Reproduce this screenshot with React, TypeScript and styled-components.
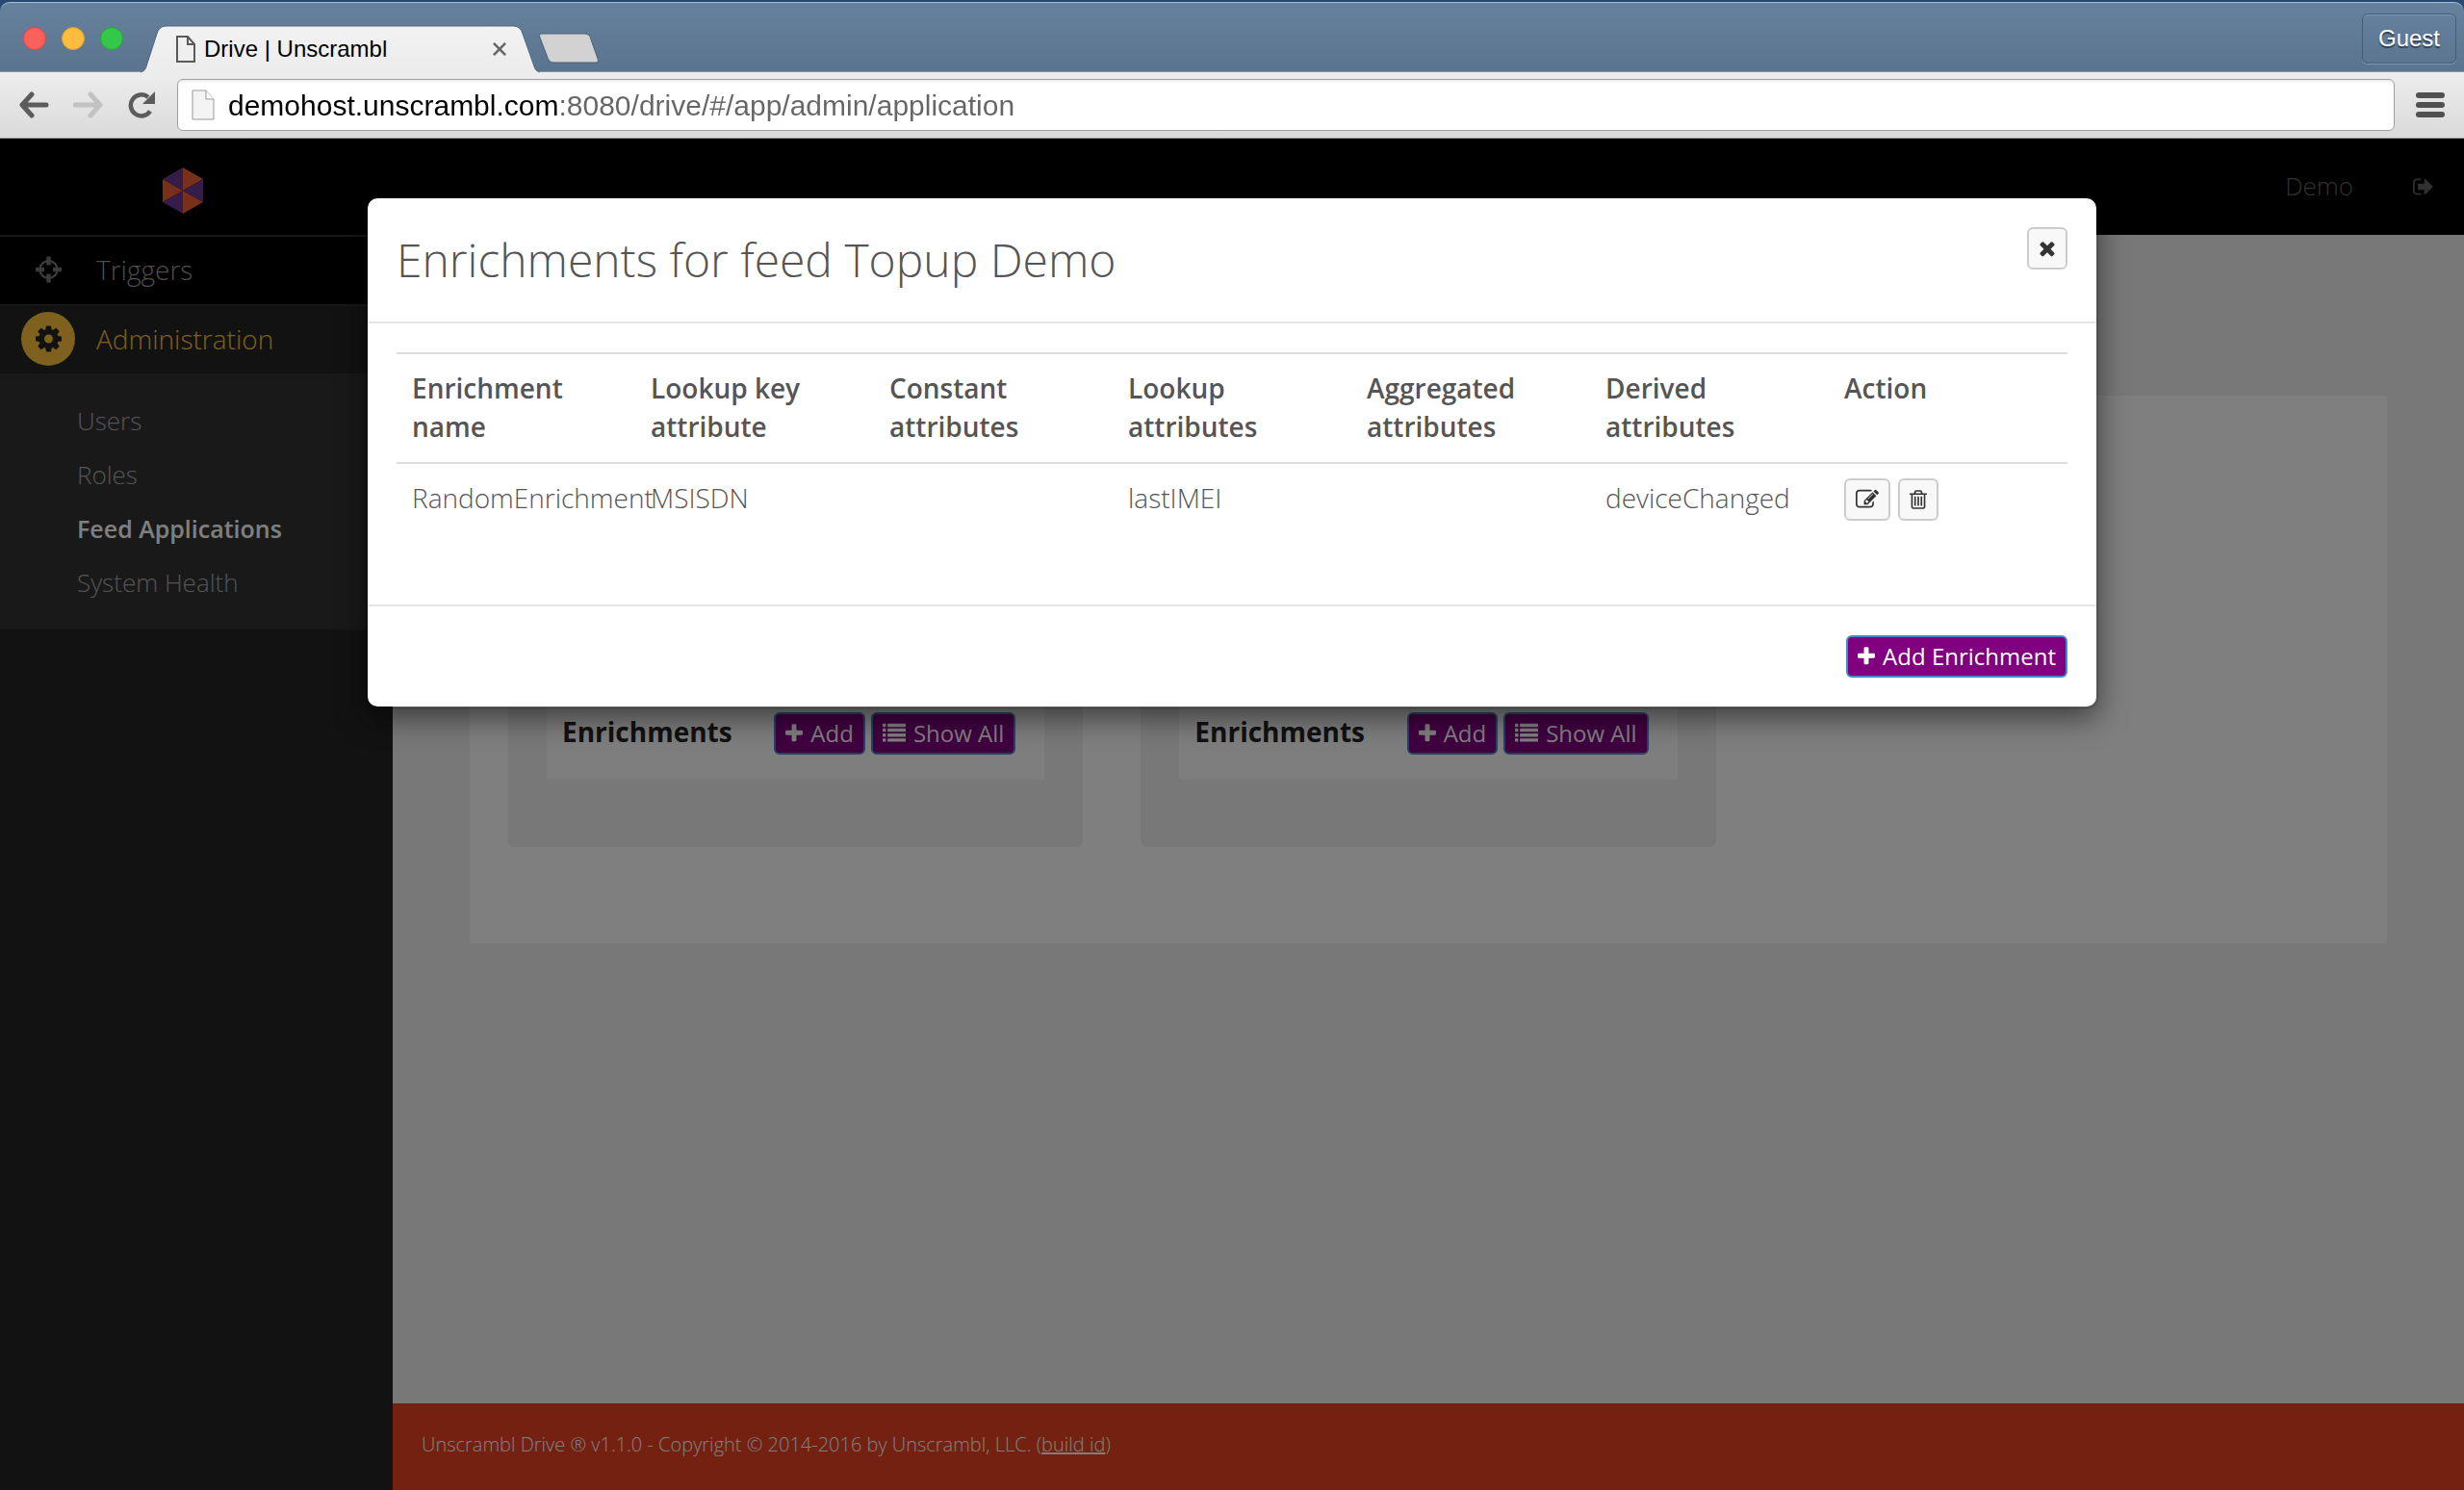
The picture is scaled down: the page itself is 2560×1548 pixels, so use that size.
import React from "react";
import styled, { createGlobalStyle, css } from "styled-components";

const UI_FONT = `"Open Sans", "Noto Sans", sans-serif`;
const CHROME_FONT = `"Liberation Sans", Arial, sans-serif`;

const GlobalStyle = createGlobalStyle`
  *, *::before, *::after { box-sizing: border-box; }
  body { margin: 0; background: #2b4870; font-family: ${UI_FONT}; font-weight: 300; }
  button, input { font: inherit; margin: 0; }
  h1, h2, h3, p, ul { margin: 0; padding: 0; font-weight: inherit; }
  ul { list-style: none; }
  a { color: inherit; }
`;

/* ---------- icons ---------- */

const ICONS = {
  trash: {
    x: 192, w: 1408,
    d: "M704 1376v-704q0-14-9-23t-23-9h-64q-14 0-23 9t-9 23v704q0 14 9 23t23 9h64q14 0 23-9t9-23zm256 0v-704q0-14-9-23t-23-9h-64q-14 0-23 9t-9 23v704q0 14 9 23t23 9h64q14 0 23-9t9-23zm256 0v-704q0-14-9-23t-23-9h-64q-14 0-23 9t-9 23v704q0 14 9 23t23 9h64q14 0 23-9t9-23zm128 84v-948h-896v948q0 22 7 40.5t14.5 27 10.5 8.5h832q3 0 10.5-8.5t14.5-27 7-40.5zm-672-1076h448l-48-117q-7-9-17-11h-317q-10 2-17 11zm928 32v64q0 14-9 23t-23 9h-96v948q0 83-47 143.5t-113 60.5h-832q-66 0-113-58.5t-47-141.5v-952h-96q-14 0-23-9t-9-23v-64q0-14 9-23t23-9h309l70-167q15-37 54-63t79-26h320q40 0 79 26t54 63l70 167h309q14 0 23 9t9 23z",
  },
  edit: {
    x: 0, w: 1792,
    d: "M888 1184l116-116-152-152-116 116v56h96v96h56zm440-720q-16-16-33 1l-350 350q-17 17-1 33t33-1l350-350q17-17 1-33zm80 594v190q0 119-84.5 203.5t-203.5 84.5h-832q-119 0-203.5-84.5t-84.5-203.5v-832q0-119 84.5-203.5t203.5-84.5h832q63 0 117 25 15 7 18 23 3 17-9 29l-49 49q-14 14-32 8-23-6-45-6h-832q-66 0-113 47t-47 113v832q0 66 47 113t113 47h832q66 0 113-47t47-113v-126q0-13 9-22l64-64q15-15 35-7t20 29zm-96-738l288 288-672 672h-288v-288zm444 132l-92 92-288-288 92-92q28-28 68-28t68 28l152 152q28 28 28 68t-28 68z",
  },
  crosshairs: {
    x: 128, w: 1536,
    d: "M1325 1024h-109q-26 0-45-19t-19-45v-128q0-26 19-45t45-19h109q-32-108-112.5-188.5t-188.5-112.5v109q0 26-19 45t-45 19h-128q-26 0-45-19t-19-45v-109q-108 32-188.5 112.5t-112.5 188.5h109q26 0 45 19t19 45v128q0 26-19 45t-45 19h-109q32 108 112.5 188.5t188.5 112.5v-109q0-26 19-45t45-19h128q26 0 45 19t19 45v109q108-32 188.5-112.5t112.5-188.5zm339-192v128q0 26-19 45t-45 19h-143q-37 161-154.5 278.5t-278.5 154.5v143q0 26-19 45t-45 19h-128q-26 0-45-19t-19-45v-143q-161-37-278.5-154.5t-154.5-278.5h-143q-26 0-45-19t-19-45v-128q0-26 19-45t45-19h143q37-161 154.5-278.5t278.5-154.5v-143q0-26 19-45t45-19h128q26 0 45 19t19 45v143q161 37 278.5 154.5t154.5 278.5h143q26 0 45 19t19 45z",
  },
  cog: {
    x: 128, w: 1536,
    d: "M1152 896q0-106-75-181t-181-75-181 75-75 181 75 181 181 75 181-75 75-181zm512-109v222q0 12-8 23t-20 13l-185 28q-19 54-39 91 35 50 107 138 10 12 10 25t-9 23q-27 37-99 108t-94 71q-12 0-26-9l-138-108q-44 23-91 38-16 136-29 186-7 28-36 28h-222q-14 0-24.5-8.5t-11.5-21.5l-28-184q-49-16-90-37l-141 107q-10 9-25 9-14 0-25-11-126-114-165-168-7-10-7-23 0-12 8-23 15-21 51-66.5t54-70.5q-27-50-41-99l-183-27q-13-2-21-12.5t-8-23.5v-222q0-12 8-23t19-13l186-28q14-46 39-92-40-57-107-138-10-12-10-24 0-10 9-23 26-36 98.5-107.5t94.5-71.5q13 0 26 10l138 107q44-23 91-38 16-136 29-186 7-28 36-28h222q14 0 24.5 8.5t11.5 21.5l28 184q49 16 90 37l142-107q9-9 24-9 13 0 25 10 129 119 165 170 7 8 7 22 0 12-8 23-15 21-51 66.5t-54 70.5q26 50 41 98l183 28q13 2 21 12.5t8 23.5z",
  },
  signOut: {
    x: 64, w: 1600,
    d: "M704 1440q0 4 1 20t.5 26.5-3 23.5-10 19.5-20.5 6.5h-320q-119 0-203.5-84.5t-84.5-203.5v-704q0-119 84.5-203.5t203.5-84.5h320q13 0 22.5 9.5t9.5 22.5q0 4 1 20t.5 26.5-3 23.5-10 19.5-20.5 6.5h-320q-66 0-113 47t-47 113v704q0 66 47 113t113 47h312l11.5 1 11.5 3 8 5.5 7 9 2 13.5zm928-544q0 26-19 45l-544 544q-19 19-45 19t-45-19-19-45v-288h-448q-26 0-45-19t-19-45v-384q0-26 19-45t45-19h448v-288q0-26 19-45t45-19 45 19l544 544q19 19 19 45z",
  },
  plus: {
    x: 192, w: 1408,
    d: "M1600 736v192q0 40-28 68t-68 28h-416v416q0 40-28 68t-68 28h-192q-40 0-68-28t-28-68v-416h-416q-40 0-68-28t-28-68v-192q0-40 28-68t68-28h416v-416q0-40 28-68t68-28h192q40 0 68 28t28 68v416h416q40 0 68 28t28 68z",
  },
  times: {
    x: 192, w: 1408,
    d: "M1490 1322q0 40-28 68l-136 136q-28 28-68 28t-68-28l-294-294-294 294q-28 28-68 28t-68-28l-136-136q-28-28-28-68t28-68l294-294-294-294q-28-28-28-68t28-68l136-136q28-28 68-28t68 28l294 294 294-294q28-28 68-28t68 28l136 136q28 28 28 68t-28 68l-294 294 294 294q28 28 28 68z",
  },
  list: {
    x: 0, w: 1792,
    d: "M32 128h192q32 0 32 32v192q0 32-32 32h-192q-32 0-32-32v-192q0-32 32-32zM416 128h1344q32 0 32 32v192q0 32-32 32h-1344q-32 0-32-32v-192q0-32 32-32zM32 512h192q32 0 32 32v192q0 32-32 32h-192q-32 0-32-32v-192q0-32 32-32zM416 512h1344q32 0 32 32v192q0 32-32 32h-1344q-32 0-32-32v-192q0-32 32-32zM32 896h192q32 0 32 32v192q0 32-32 32h-192q-32 0-32-32v-192q0-32 32-32zM416 896h1344q32 0 32 32v192q0 32-32 32h-1344q-32 0-32-32v-192q0-32 32-32zM32 1280h192q32 0 32 32v192q0 32-32 32h-192q-32 0-32-32v-192q0-32 32-32zM416 1280h1344q32 0 32 32v192q0 32-32 32h-1344q-32 0-32-32v-192q0-32 32-32z",
  },
};

type IconName = keyof typeof ICONS;

const IconSvg = styled.svg`
  display: block;
  flex: none;
  fill: currentColor;
`;

function Icon({ name, size }: { name: IconName; size: number }) {
  const { x, w, d } = ICONS[name];
  return (
    <IconSvg viewBox={`${x} 0 ${w} 1792`} width={Math.floor((size * w) / 1792)} height={size} aria-hidden="true">
      <path d={d} />
    </IconSvg>
  );
}

/* ---------- browser frame ---------- */

const Window = styled.div`
  display: flex;
  flex-direction: column;
  min-height: 100vh;
`;

const TitleBar = styled.div`
  display: flex;
  align-items: flex-end;
  height: 72px;
  margin-top: 2px;
  padding-right: 8px;
  border-top: 1px solid #a5bdd3;
  border-radius: 10px 10px 0 0;
  background: linear-gradient(#67829e, #5a738e);
  font-family: ${CHROME_FONT};
  font-weight: 400;
`;

const Lights = styled.div`
  display: flex;
  gap: 16px;
  padding: 0 18px 22px 24px;
`;

const Light = styled.button<{ $fill: string; $edge: string }>`
  width: 24px;
  height: 24px;
  padding: 0;
  border: 1px solid ${(p) => p.$edge};
  border-radius: 50%;
  background: ${(p) => p.$fill};
`;

const Tab = styled.div`
  position: relative;
  z-index: 1;
  display: flex;
  align-items: center;
  width: 414px;
  height: 50px;
  margin-bottom: -2px;
  padding: 0 34px 0 36px;
`;

const TabShape = styled.svg`
  position: absolute;
  inset: 0;
`;

const TabTitle = styled.span`
  position: relative;
  flex: 1;
  margin-left: 8px;
  font-size: 24px;
  line-height: 28px;
  color: #000;
`;

const BareButton = styled.button`
  position: relative;
  display: flex;
  padding: 0;
  border: 0;
  background: none;
  color: inherit;
`;

const NewTab = styled(BareButton)`
  margin-bottom: 8px;
`;

const GuestButton = styled.button`
  height: 52px;
  margin: 0 0 8px auto;
  padding: 0 16px;
  border: 1px solid #435c78;
  border-radius: 6px;
  background: linear-gradient(#64809d, #5c7691);
  box-shadow: inset 0 1px 0 #7f9ab6, 0 1px 0 #7f9ab6;
  color: #fff;
  font-size: 24px;
  text-shadow: 0 2px 1px rgba(0, 0, 0, 0.5);
`;

const Toolbar = styled.div`
  display: flex;
  align-items: center;
  height: 70px;
  padding: 0 18px;
  border-top: 1px solid #8a949e;
  border-bottom: 1px solid #9b9b9b;
  background: linear-gradient(#ededed, #dadada);
  font-family: ${CHROME_FONT};
  font-weight: 400;
`;

const NavButtons = styled.div`
  display: flex;
  align-items: center;
  gap: 24px;
  margin-right: 22px;
`;

const AddressBar = styled.label`
  display: flex;
  align-items: center;
  flex: 1;
  height: 54px;
  padding: 0 14px;
  border: 1px solid #a0a0a0;
  border-radius: 6px;
  background: #fff;
  box-shadow: inset 0 2px 2px rgba(0, 0, 0, 0.08);
`;

const AddressInput = styled.input`
  flex: 1;
  height: 48px;
  margin-left: 14px;
  padding: 2px 0 0;
  border: 0;
  outline: 0;
  background: linear-gradient(90deg, #000 346px, #666 346px);
  background-clip: text;
  -webkit-background-clip: text;
  color: transparent;
  font-size: 30px;
`;

const MenuButton = styled(BareButton)`
  margin: 0 2px 0 22px;
`;

/* ---------- application ---------- */

const Page = styled.div`
  position: relative;
  display: grid;
  grid-template: 100px 1fr / 408px 1fr;
  flex: 1;
  background: #f0f0f0;
`;

const Header = styled.header`
  grid-column: 1 / -1;
  display: flex;
  align-items: center;
  padding: 0 32px 0 169px;
  background: #000;
  color: #606060;
`;

const Logo = styled.svg`
  margin-top: 8px;
`;

const UserName = styled.span`
  margin-left: auto;
  padding-bottom: 2px;
  font-size: 26px;
  line-height: 36px;
`;

const SignOut = styled(BareButton)`
  margin-left: 62px;
`;

const Sidebar = styled.nav`
  background: #242424;
`;

const NavItem = styled.a<{ $active?: boolean }>`
  display: flex;
  align-items: center;
  gap: 22px;
  height: 72px;
  padding: 0 22px 2px;
  border-top: 2px solid #303030;
  background: #000;
  color: #9a9a9a;
  font-size: 28px;
  text-decoration: none;
  ${(p) =>
    p.$active &&
    css`
      background: #242424;
      color: #fac238;
    `}
`;

const NavIcon = styled.span<{ $active?: boolean }>`
  display: flex;
  align-items: center;
  justify-content: center;
  width: 56px;
  height: 56px;
  border-radius: 50%;
  color: #777;
  ${(p) =>
    p.$active &&
    css`
      background: #fac238;
      color: #242424;
    `}
`;

const SubMenu = styled.ul`
  padding: 21px 0 21px 80px;
  background: #333;
`;

const SubLink = styled.a<{ $active?: boolean }>`
  display: block;
  color: ${(p) => (p.$active ? "#fff" : "#a8a8a8")};
  font-size: ${(p) => (p.$active ? 25 : 26)}px;
  font-weight: ${(p) => (p.$active ? 600 : 300)};
  line-height: 56px;
  text-decoration: none;
`;

const Main = styled.main`
  display: flex;
  flex-direction: column;
`;

const Panel = styled.section`
  display: grid;
  grid-template-columns: repeat(3, 1fr);
  gap: 60px;
  margin: 167px 80px auto;
  padding: 40px 40px 100px;
  background: #fff;
`;

const Card = styled.article`
  padding: 60px 40px 70px;
  border-radius: 6px;
  background: #f0f0f0;
`;

const CardBody = styled.div`
  display: flex;
  flex-direction: column;
  justify-content: flex-end;
  min-height: 299px;
  padding: 0 30px 26px 16px;
  background: #fcfcfc;
`;

const CardRow = styled.div`
  display: flex;
  align-items: flex-start;
  gap: 6px;
`;

const CardLabel = styled.h3`
  flex: 1;
  color: #222;
  font-size: 28px;
  font-weight: 700;
  line-height: 40px;
`;

const buttonBase = css`
  display: inline-flex;
  align-items: center;
  justify-content: center;
  height: 44px;
  padding: 0 10px;
  border-radius: 6px;
  font-size: 24px;
  font-weight: 400;
  line-height: 36px;
  white-space: nowrap;
`;

const PrimaryButton = styled.button`
  ${buttonBase}
  gap: 8px;
  border: 2px solid #428bca;
  background: #800080;
  color: #fff;
`;

const IconButton = styled.button`
  ${buttonBase}
  border: 2px solid #ccc;
  background: #f8f8f8;
  color: #333;
`;

const Footer = styled.footer`
  padding: 25px 30px 29px;
  background: #ea4224;
  color: #fff;
  font-size: 20px;
  line-height: 36px;
`;

/* ---------- modal ---------- */

const Overlay = styled.div`
  position: absolute;
  inset: 0;
  display: flex;
  align-items: flex-start;
  justify-content: center;
  padding-top: 60px;
  background: rgba(0, 0, 0, 0.5);
`;

const Modal = styled.section`
  width: 1800px;
  max-width: calc(100% - 40px);
  border: 2px solid rgba(0, 0, 0, 0.2);
  border-radius: 12px;
  background: #fff;
  background-clip: padding-box;
  box-shadow: 0 10px 30px rgba(0, 0, 0, 0.5);
  color: #555;
`;

const ModalHeader = styled.div`
  display: flex;
  align-items: flex-start;
  justify-content: space-between;
  padding: 30px;
  border-bottom: 2px solid #e5e5e5;
`;

const ModalTitle = styled.h2`
  font-size: 48px;
  line-height: 68px;
`;

const ModalBody = styled.div`
  padding: 30px 30px 40px;
`;

const ModalFooter = styled.div`
  display: flex;
  justify-content: flex-end;
  padding: 30px;
  border-top: 2px solid #e5e5e5;
`;

const Table = styled.table`
  width: 100%;
  table-layout: fixed;
  border-collapse: separate;
  border-spacing: 0;
  font-size: 28px;
  line-height: 40px;
  text-align: left;

  th, td {
    padding: 15px 16px 17px;
    border-top: 2px solid #ddd;
    vertical-align: top;
  }
  th { font-weight: 600; }
  td { height: 108px; }
`;

const Actions = styled.div`
  display: flex;
  gap: 8px;
`;

const COLUMNS = [
  "Enrichment name",
  "Lookup key attribute",
  "Constant attributes",
  "Lookup attributes",
  "Aggregated attributes",
  "Derived attributes",
  "Action",
];

const ROW = ["RandomEnrichment", "MSISDN", "", "lastIMEI", "", "deviceChanged"];

const SUB_LINKS = ["Users", "Roles", "Feed Applications", "System Health"];

function FeedCard() {
  return (
    <Card>
      <CardBody>
        <CardRow>
          <CardLabel>Enrichments</CardLabel>
          <PrimaryButton type="button">
            <Icon name="plus" size={24} />
            Add
          </PrimaryButton>
          <PrimaryButton type="button">
            <Icon name="list" size={24} />
            Show All
          </PrimaryButton>
        </CardRow>
      </CardBody>
    </Card>
  );
}

function BrowserFrame() {
  return (
    <>
      <TitleBar>
        <Lights>
          <Light type="button" aria-label="Close window" $fill="#fc605b" $edge="#e2463f" />
          <Light type="button" aria-label="Minimize window" $fill="#fdbc40" $edge="#e0a028" />
          <Light type="button" aria-label="Zoom window" $fill="#34c84a" $edge="#24a836" />
        </Lights>
        <Tab>
          <TabShape width="416" height="50" viewBox="0 0 416 50" aria-hidden="true">
            <defs>
              <linearGradient id="tabFill" x1="0" y1="0" x2="0" y2="1">
                <stop offset="0" stopColor="#f2f2f2" />
                <stop offset="1" stopColor="#ececec" />
              </linearGradient>
            </defs>
            <path
              d="M0 49c4-1 5-3 6-6L17 9c2-6 5-8 11-8h358c6 0 9 2 11 8l12 34c1 3 2 5 6 6v1H0z"
              fill="url(#tabFill)"
            />
            <path
              d="M0 49c4-1 5-3 6-6L17 9c2-6 5-8 11-8h358c6 0 9 2 11 8l12 34c1 3 2 5 6 6"
              fill="none"
              stroke="#51657b"
            />
          </TabShape>
          <BareButton as="span">
            <svg width="22" height="28" viewBox="0 0 22 28" fill="none" stroke="#5a5a5a" strokeWidth="2" aria-hidden="true">
              <path d="M2 1h11l7 8v18H2zM13 1v8h7" />
            </svg>
          </BareButton>
          <TabTitle>Drive | Unscrambl</TabTitle>
          <BareButton type="button" aria-label="Close tab">
            <svg width="14" height="14" viewBox="0 0 16 16" stroke="#666" strokeWidth="3" aria-hidden="true">
              <path d="M1 1l14 14M15 1L1 15" />
            </svg>
          </BareButton>
        </Tab>
        <NewTab type="button" aria-label="New tab">
          <svg width="62" height="32" viewBox="0 0 62 32" aria-hidden="true">
            <path d="M4 1h42c5 0 7 2 8 6l7 20c1 3 0 4-3 4H16c-4 0-6-2-7-5L1 5c-1-3 0-4 3-4z" fill="#d2d2d2" stroke="#4d6279" />
          </svg>
        </NewTab>
        <GuestButton type="button">Guest</GuestButton>
      </TitleBar>
      <Toolbar>
        <NavButtons>
          <BareButton type="button" aria-label="Back">
            <svg width="34" height="28" viewBox="0 0 34 28" fill="none" stroke="#5c5c5c" strokeWidth="5" strokeLinecap="round" strokeLinejoin="round">
              <path d="M30 14H6M15 3L5 14l10 11" />
            </svg>
          </BareButton>
          <BareButton type="button" aria-label="Forward">
            <svg width="32" height="28" viewBox="0 0 32 28" fill="none" stroke="#c2c2c2" strokeWidth="5" strokeLinecap="round" strokeLinejoin="round">
              <path d="M2 14h24M18 3l10 11-10 11" />
            </svg>
          </BareButton>
          <BareButton type="button" aria-label="Reload">
            <svg width="30" height="28" viewBox="0 0 30 28" fill="none">
              <path d="M24 20.500A11 11 0 1 1 22 6" stroke="#5c5c5c" strokeWidth="4.500" />
              <path d="M29 0v13H16z" fill="#5c5c5c" />
            </svg>
          </BareButton>
        </NavButtons>
        <AddressBar>
          <svg width="24" height="32" viewBox="0 0 24 32" aria-hidden="true">
            <path d="M1 1h14l8 9v21H1z" fill="#f4f4f4" stroke="#999" />
            <path d="M15 1v9h8" fill="#fff" stroke="#999" />
          </svg>
          <AddressInput aria-label="Address" defaultValue="demohost.unscrambl.com:8080/drive/#/app/admin/application" />
        </AddressBar>
        <MenuButton type="button" aria-label="Menu">
          <svg width="30" height="26" viewBox="0 0 30 26" fill="#505050">
            <rect width="30" height="6" rx="3" />
            <rect y="10" width="30" height="6" rx="3" />
            <rect y="20" width="30" height="6" rx="3" />
          </svg>
        </MenuButton>
      </Toolbar>
    </>
  );
}

function EnrichmentsModal() {
  return (
    <Modal role="dialog" aria-labelledby="enrichments-title">
      <ModalHeader>
        <ModalTitle id="enrichments-title">Enrichments for feed Topup Demo</ModalTitle>
        <IconButton type="button" aria-label="Close">
          <Icon name="times" size={24} />
        </IconButton>
      </ModalHeader>
      <ModalBody>
        <Table>
          <thead>
            <tr>
              {COLUMNS.map((c) => (
                <th key={c} scope="col">{c}</th>
              ))}
            </tr>
          </thead>
          <tbody>
            <tr>
              {ROW.map((v, i) => (
                <td key={i}>{v}</td>
              ))}
              <td>
                <Actions>
                  <IconButton type="button" aria-label="Edit enrichment">
                    <Icon name="edit" size={24} />
                  </IconButton>
                  <IconButton type="button" aria-label="Delete enrichment">
                    <Icon name="trash" size={24} />
                  </IconButton>
                </Actions>
              </td>
            </tr>
          </tbody>
        </Table>
      </ModalBody>
      <ModalFooter>
        <PrimaryButton type="button">
          <Icon name="plus" size={24} />
          Add Enrichment
        </PrimaryButton>
      </ModalFooter>
    </Modal>
  );
}

export default function App() {
  return (
    <Window>
      <GlobalStyle />
      <BrowserFrame />
      <Page>
        <Header>
          <Logo width="42" height="48" viewBox="0 0 42 48" role="img" aria-label="Unscrambl">
            <path d="M21 0L42 12L21 24zM42 36L21 48L21 24zM0 12L21 24L0 36z" fill="#f06035" />
            <path d="M21 0L0 12L21 24zM42 12V36L21 24zM0 36L21 48L21 24z" fill="#6c3890" />
          </Logo>
          <UserName>Demo</UserName>
          <SignOut type="button" aria-label="Sign out">
            <Icon name="signOut" size={24} />
          </SignOut>
        </Header>
        <Sidebar>
          <NavItem href="#triggers">
            <NavIcon>
              <Icon name="crosshairs" size={32} />
            </NavIcon>
            Triggers
          </NavItem>
          <NavItem href="#administration" $active>
            <NavIcon $active>
              <Icon name="cog" size={32} />
            </NavIcon>
            Administration
          </NavItem>
          <SubMenu>
            {SUB_LINKS.map((label) => (
              <li key={label}>
                <SubLink href="#" $active={label === "Feed Applications"}>{label}</SubLink>
              </li>
            ))}
          </SubMenu>
        </Sidebar>
        <Main>
          <Panel>
            <FeedCard />
            <FeedCard />
          </Panel>
          <Footer>
            Unscrambl Drive ® v1.1.0 - Copyright © 2014-2016 by Unscrambl, LLC. (<a href="#build">build id</a>)
          </Footer>
        </Main>
        <Overlay>
          <EnrichmentsModal />
        </Overlay>
      </Page>
    </Window>
  );
}
